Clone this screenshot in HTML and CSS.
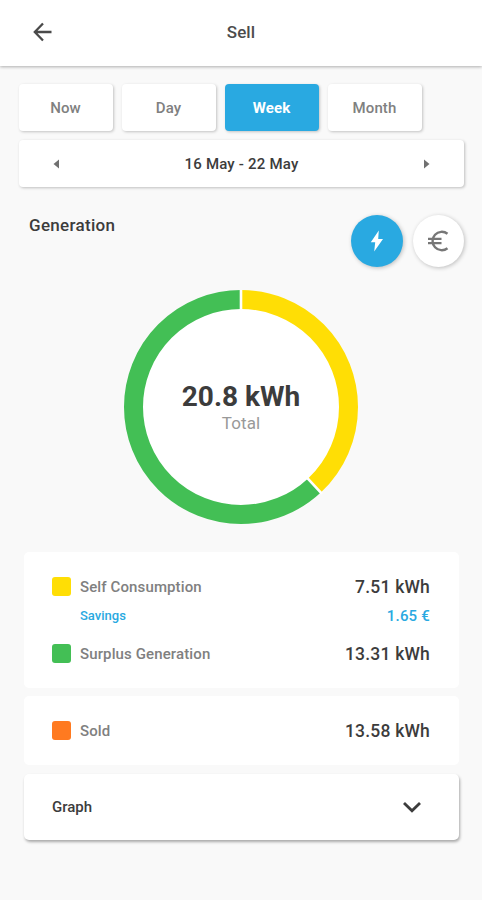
FILE: index.html
```
<!DOCTYPE html>
<html lang="en">
<head>
<meta charset="UTF-8" />
<meta name="viewport" content="width=device-width, initial-scale=1" />
<title>Sell</title>
<link rel="stylesheet" href="styles.css">
</head>
<body>
<header class="header">
  <button type="button" class="back" aria-label="Back">
    <svg width="20" height="20" viewBox="0 0 20 20"><path d="M18.5 10H2M10 1.5L1.8 10L10 18.5" /></svg>
  </button>
  <h1>Sell</h1>
</header>

<main>
  <div class="tabs">
    <button type="button" class="tab">Now</button>
    <button type="button" class="tab">Day</button>
    <button type="button" class="tab active">Week</button>
    <button type="button" class="tab">Month</button>
  </div>

  <div class="date-bar">
    <svg class="arrow" width="6" height="10" viewBox="0 0 6 10"><path d="M6 0.5V9.5L0.5 5Z" /></svg>
    <span class="date">16 May - 22 May</span>
    <svg class="arrow" width="6" height="10" viewBox="0 0 6 10"><path d="M0 0.5V9.5L5.5 5Z" /></svg>
  </div>

  <div class="section-head">
    <h2>Generation</h2>
    <div class="units">
      <button type="button" class="unit active" aria-label="Energy">
        <svg width="14" height="22" viewBox="0 0 14 22"><path d="M8.8 0.5L0.8 12.3H5.2L4.2 21.5L13 9H8.2Z" /></svg>
      </button>
      <button type="button" class="unit" aria-label="Euro">
        <svg class="euro" width="22" height="22" viewBox="0 0 22 22"><path d="M20.5 3.8A9.2 9.2 0 1 0 20.5 18.2M1 8.9H14.5M1 13.1H14.5" /></svg>
      </button>
    </div>
  </div>

  <div class="chart">
    <svg width="234" height="234" viewBox="0 0 234 234">
      <circle class="hole" cx="117" cy="117" r="99" />
      <g transform="rotate(-90 117 117)">
        <circle class="ring self" cx="117" cy="117" r="107.5" pathLength="100" stroke-dasharray="38 62" />
        <circle class="ring surplus" cx="117" cy="117" r="107.5" pathLength="100" stroke-dasharray="62 38" stroke-dashoffset="-38" />
      </g>
      <path class="gap" d="M117 0V20M182 186.7L198 203.9" />
    </svg>
    <div class="total">
      <strong>20.8 kWh</strong>
      <span>Total</span>
    </div>
  </div>

  <div class="card usage">
    <div class="row">
      <i class="swatch yellow"></i>
      <span class="label">Self Consumption</span>
      <span class="value">7.51 kWh</span>
    </div>
    <div class="row savings">
      <span class="label">Savings</span>
      <span class="value">1.65 €</span>
    </div>
    <div class="row">
      <i class="swatch green"></i>
      <span class="label">Surplus Generation</span>
      <span class="value">13.31 kWh</span>
    </div>
  </div>

  <div class="card sold">
    <div class="row">
      <i class="swatch orange"></i>
      <span class="label">Sold</span>
      <span class="value">13.58 kWh</span>
    </div>
  </div>

  <div class="card graph">
    <span>Graph</span>
    <svg width="20" height="12" viewBox="0 0 20 12"><path d="M2 2L10 9.8L18 2" /></svg>
  </div>
</main>
</body>
</html>
```

FILE: styles.css
```
* {
  box-sizing: border-box;
}
body {
  margin: 0;
  min-height: 100vh;
  font-family: Roboto, "Liberation Sans", sans-serif;
  font-weight: 500;
  color: #3c3c3c;
  background: #f9f9f9;
}
button {
  padding: 0;
  border: none;
  font-family: inherit;
  cursor: pointer;
}
svg {
  display: block;
}
.header {
  display: grid;
  grid-template-columns: 60px 1fr 60px;
  align-items: center;
  height: 66px;
  padding-bottom: 2px;
  background: #fff;
  box-shadow: 0 1px 3px rgba(0,0,0,0.3);
}
.back {
  margin-left: 33px;
  width: 20px;
  background: none;
}
.back path {
  fill: none;
  stroke: #4a4a4a;
  stroke-width: 2.3;
}
h1 {
  margin: 0;
  font-size: 17px;
  line-height: 20px;
  font-weight: 500;
  letter-spacing: 0.1px;
  text-align: center;
  color: #4c4c4c;
}
main {
  padding: 18px 18px 0 19px;
}
.tabs {
  display: flex;
  gap: 9px;
}
.tab {
  width: 94px;
  height: 47px;
  padding-right: 1px;
  border-radius: 4px;
  background: #fff;
  box-shadow: 1px 1px 3px rgba(0,0,0,0.22);
  color: #808080;
  font-size: 15px;
  font-weight: 500;
  letter-spacing: 0.1px;
}
.tab.active {
  background: #29a9e1;
  color: #fff;
  font-weight: 700;
}
.date-bar {
  display: flex;
  align-items: center;
  justify-content: space-between;
  height: 47px;
  margin-top: 9px;
  padding: 0 34px;
  border-radius: 4px;
  background: #fff;
  box-shadow: 1px 1px 3px rgba(0,0,0,0.24);
}
.date {
  font-size: 15px;
  letter-spacing: 0.2px;
}
.arrow {
  fill: #707070;
}
.section-head {
  display: flex;
  justify-content: space-between;
  height: 52px;
  margin-top: 28px;
  padding-left: 10px;
}
h2 {
  margin: 0;
  font-size: 17px;
  line-height: 21px;
  font-weight: 500;
  letter-spacing: 0.3px;
}
.units {
  display: flex;
  gap: 10px;
}
.unit {
  display: flex;
  align-items: center;
  justify-content: center;
  width: 51px;
  height: 52px;
  border-radius: 50%;
  background: #fff;
  box-shadow: 1px 1px 4px rgba(0,0,0,0.24);
}
.unit.active {
  width: 52px;
  background: #29a9e1;
}
.unit path {
  fill: #fff;
}
.unit .euro {
  margin-right: 2px;
}
.unit .euro path {
  fill: none;
  stroke: #777;
  stroke-width: 2.4;
}
.chart {
  display: grid;
  place-items: center;
  width: 234px;
  height: 234px;
  margin: 23px 0 28px 105px;
}
.chart > * {
  grid-area: 1 / 1;
}
.hole {
  fill: #fff;
}
.ring {
  fill: none;
  stroke-width: 19;
}
.surplus {
  stroke: #43bf55;
}
.self {
  stroke: #ffde05;
}
.gap {
  stroke: #fff;
  stroke-width: 2.6;
}
.total {
  display: flex;
  flex-direction: column;
  align-items: center;
}
.total strong {
  font-size: 28px;
  line-height: 32px;
  font-weight: 700;
}
.total span {
  font-size: 17px;
  line-height: 21px;
  font-weight: 400;
  letter-spacing: 0.1px;
  color: #999;
}
.card {
  margin: 0 5px 8px;
  padding: 0 29px 0 28px;
  border-radius: 5px;
  background: #fff;
}
.usage {
  height: 136px;
  padding-top: 24px;
}
.row {
  display: flex;
  align-items: center;
  height: 21px;
}
.swatch {
  width: 19px;
  height: 19px;
  margin-right: 9px;
  border-radius: 3px;
}
.yellow {
  background: #ffde05;
}
.green {
  background: #43bf55;
}
.orange {
  background: #ff7a20;
}
.label {
  font-size: 15px;
  letter-spacing: 0.12px;
  color: #808080;
}
.value {
  margin-left: auto;
  font-size: 17.5px;
  letter-spacing: 0.2px;
}
.savings {
  margin: 8px 0 17px;
  padding-left: 28px;
}
.savings .label {
  font-size: 13px;
  letter-spacing: 0;
  color: #29a9e1;
}
.savings .value {
  font-size: 15px;
  letter-spacing: 0.2px;
  color: #29a9e1;
}
.sold {
  height: 69px;
  margin-bottom: 9px;
  padding-top: 24px;
}
.graph {
  display: flex;
  align-items: center;
  justify-content: space-between;
  height: 66px;
  padding-right: 37px;
  font-size: 15px;
  box-shadow: 1px 2px 3px rgba(0,0,0,0.32);
}
.graph path {
  fill: none;
  stroke: #3c3c3c;
  stroke-width: 2.8;
}
```
